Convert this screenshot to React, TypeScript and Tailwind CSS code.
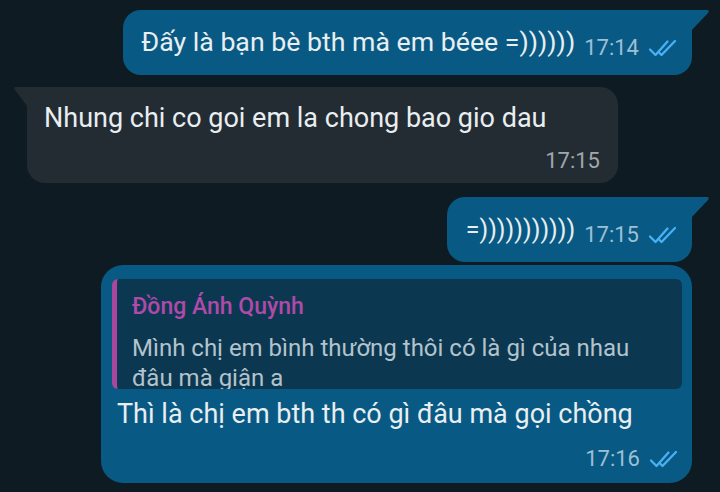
const Ticks = () => (
  <svg width="30" height="18" viewBox="0 0 30 18" fill="none" className="ml-[9px] shrink-0">
    <path d="M2 10.5 L7.5 16 L19.5 2.5" stroke="#48b0f5" strokeWidth="2.3" strokeLinecap="round" strokeLinejoin="round" />
    <path d="M11.5 14 L13.5 16 L27 2" stroke="#48b0f5" strokeWidth="2.3" strokeLinecap="round" strokeLinejoin="round" />
  </svg>
);

const TailRight = () => (
  <svg width="20" height="22" viewBox="0 0 20 22" className="absolute top-0 right-[-18px]">
    <path d="M0 0 L17 0 Q20 0 18 3 L0 22 Z" fill="#085a84" />
  </svg>
);

const TailLeft = () => (
  <svg width="18" height="24" viewBox="0 0 18 24" className="absolute top-0 left-[-14px]">
    <path d="M18 0 L3 0 Q0 0 2 3 L18 24 Z" fill="#232c33" />
  </svg>
);

const OutTime = ({ t }: { t: string }) => (
  <span className="ml-[9px] flex items-center translate-y-[5px]">
    <span className="text-[22px] leading-none text-[#9dc0d6]">{t}</span>
    <Ticks />
  </span>
);

export default function App() {
  return (
    <div
      className="w-[720px] h-[492px] overflow-hidden bg-[#0f1b23] flex flex-col text-[#e9eef1]"
      style={{ fontFamily: "Roboto, 'Noto Sans', sans-serif" }}
    >
      {/* msg 1 */}
      <div className="flex justify-end pr-[28px] pt-[10px]">
        <div className="relative h-[65px] bg-[#085a84] rounded-[18px] rounded-tr-none flex items-center pl-[18px] pr-[14px]">
          <TailRight />
          <span className="text-[26.7px] leading-none">Đấy là bạn bè bth mà em béee =))))))</span>
          <OutTime t="17:14" />
        </div>
      </div>

      {/* msg 2 */}
      <div className="flex pl-[27px] pt-[12px]">
        <div className="relative w-[591px] h-[96px] bg-[#232c33] rounded-[18px] rounded-tl-none flex flex-col pl-[17px] pr-[18px] pt-[15px]">
          <TailLeft />
          <span className="text-[27px] leading-[32px]">Nhung chi co goi em la chong bao gio dau</span>
          <span className="self-end mt-[16px] text-[22px] leading-none text-[#a0a7ad]">17:15</span>
        </div>
      </div>

      {/* msg 3 */}
      <div className="flex justify-end pr-[28px] pt-[14px]">
        <div className="relative h-[65px] bg-[#085a84] rounded-[18px] rounded-tr-none flex items-center pl-[19px] pr-[14px]">
          <TailRight />
          <span className="text-[25px] leading-none">=)))))))))))</span>
          <OutTime t="17:15" />
        </div>
      </div>

      {/* msg 4 with reply */}
      <div className="flex justify-end pr-[28px] pt-[3px]">
        <div className="w-[591px] h-[218px] bg-[#085a84] rounded-[22px] flex flex-col pl-[11px] pr-[10px] pt-[14px]">
          <div className="h-[110px] overflow-hidden rounded-[6px] bg-[#0b3850] border-l-[5px] border-[#a9479f] pl-[15px] pr-[50px] pt-[14px]">
            <div className="text-[23px] leading-[28px] font-medium text-[#b04aa8]">Đồng Ánh Quỳnh</div>
            <div className="mt-[12px] text-[24px] leading-[30px] text-[#b3c3cd]">
              Mình chị em bình thường thôi có là gì của nhau đâu mà giận a
            </div>
          </div>
          <div className="pl-[5px] pt-[9px] text-[27px] leading-[32px]">Thì là chị em bth th có gì đâu mà gọi chồng</div>
          <div className="self-end mt-[18px] mr-[3px] flex items-center">
            <span className="text-[22px] leading-none text-[#9dc0d6]">17:16</span>
            <Ticks />
          </div>
        </div>
      </div>
    </div>
  );
}
